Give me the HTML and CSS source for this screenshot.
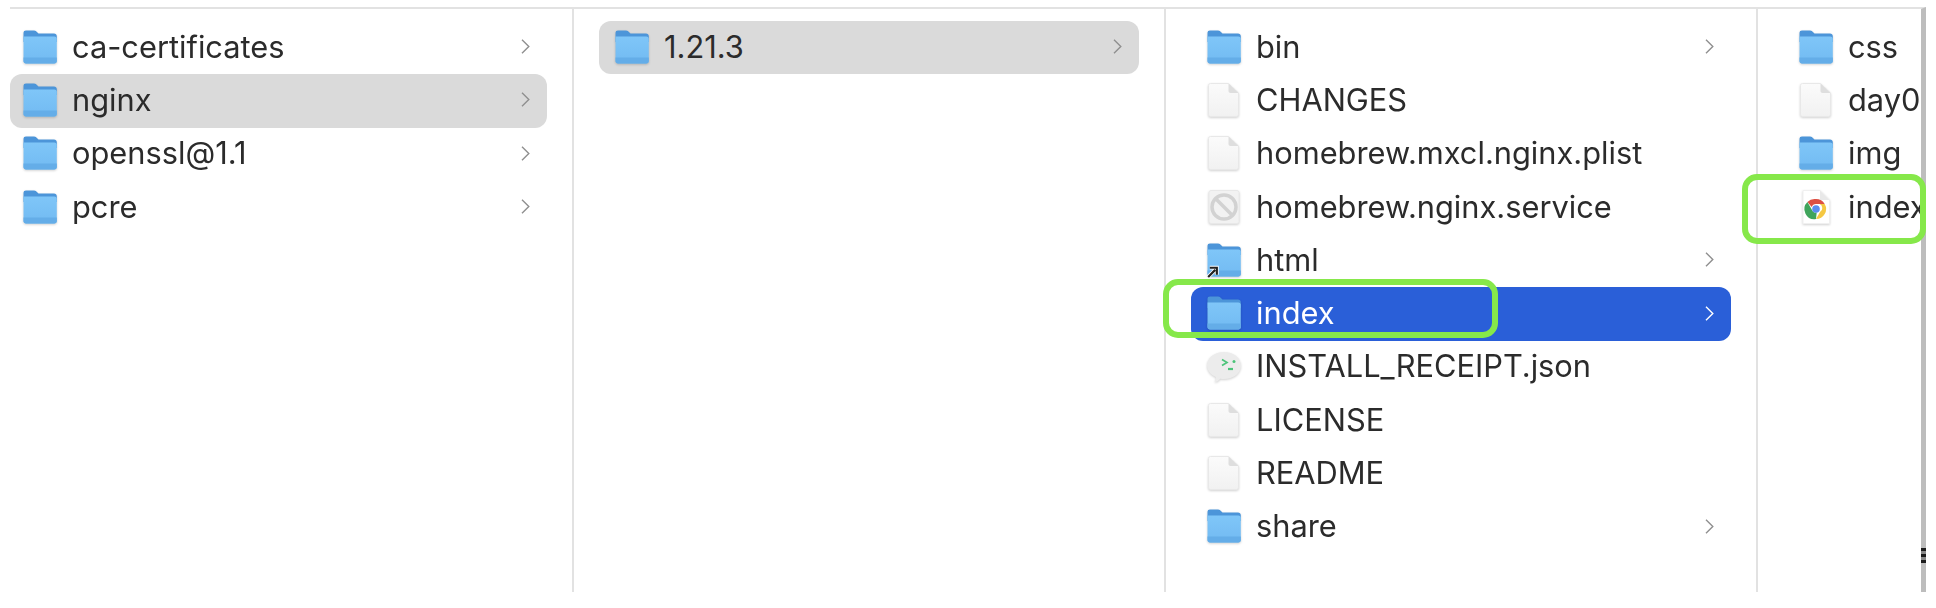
FILE: index.html
```html
<!DOCTYPE html>
<html lang="en">
<head>
  <meta charset="UTF-8" />
  <title>nginx</title>
  <link rel="stylesheet" href="styles.css">
</head>
<body>
  <svg class="defs" width="0" height="0">
    <defs>
      <linearGradient id="docFill" x1="0" y1="0" x2="0" y2="1">
        <stop offset="0" stop-color="#fbfbfb" />
        <stop offset="1" stop-color="#f1f1f1" />
      </linearGradient>
      <linearGradient id="folderFill" x1="0" y1="0" x2="0" y2="1">
        <stop offset="0" stop-color="#7fc6f8" />
        <stop offset="1" stop-color="#72baf2" />
      </linearGradient>
      <symbol id="folder" viewBox="0 0 34 34">
        <path d="M.5 3C.5 1.300 1.500.5 3 .5h8c1 0 1.700.4 2.400 1.100L15.500 3.500H31c1.600 0 2.800 1.100 2.800 2.700V12H.5z" fill="#4c95d9" />
        <path d="M.5 6.500h30.800c1.600 0 2.500 1 2.500 2.500v22c0 1.500-1 2.500-2.500 2.500H3C1.500 33.500.5 32.500.5 31z" fill="url(#folderFill)" />
        <path d="M.5 27.500h33.300V31c0 1.500-1 2.500-2.500 2.500H3C1.500 33.500.5 32.500.5 31z" fill="#64ade8" />
      </symbol>
      <symbol id="doc" viewBox="0 0 34 34">
        <path d="M3.500.5h18l10 9.500v21.500c0 1.300-.8 2-2 2h-26c-1.200 0-2-.7-2-2v-29c0-1.300.8-2 2-2z" fill="url(#docFill)" stroke="#e8e8e8" />
        <path d="M21.500.5v7.500c0 1.200.8 2 2 2h8z" fill="#dedede" />
      </symbol>
      <symbol id="blocked" viewBox="0 0 34 34">
        <rect x="2" y="0.500" width="30" height="33" rx="2" fill="#f2f2f2" stroke="#e8e8e8" />
        <circle cx="17" cy="17" r="12" fill="none" stroke="#d2d2d2" stroke-width="3.500" />
        <path d="M9 9l16 16" stroke="#d2d2d2" stroke-width="3.500" />
      </symbol>
      <symbol id="bubble" viewBox="0 0 34 34">
        <path d="M17 3c9.400 0 17 5.800 17 13.500S26.400 30 17 30c-1.300 0-2.600-.1-3.800-.3C11.500 31.800 9.500 33 7.500 33c1-1.300 1.400-3 1.300-5C3.600 25.700 0 21.500 0 16.500 0 8.800 7.600 3 17 3z" fill="#ececec" />
        <path d="M15 10.500l5 3-5 3" fill="none" stroke="#4cc47a" stroke-width="1.700" />
        <path d="M21 20h5" stroke="#4cc47a" stroke-width="2.200" />
        <circle cx="27" cy="12.500" r="1.500" fill="#4cc47a" />
      </symbol>
      <symbol id="chrome" viewBox="0 0 34 34">
        <path d="M4 .5h17l9.500 9.500v23.500H4z" fill="#fff" stroke="#f0f0f0" />
        <path d="M21 .5V10h9.500z" fill="#e8e8e8" />
        <path d="M17 9a10 10 0 0 1 8.700 5H17a4.500 4.500 0 0 0-4.300 3l-4.300-5A10 10 0 0 1 17 9z" fill="#dd5044" />
        <path d="M25.700 14A10 10 0 0 1 17 29l4-7a4.500 4.500 0 0 0-.3-8z" fill="#f5c842" />
        <path d="M17 29A10 10 0 0 1 8.400 12l4.300 7.500a4.500 4.500 0 0 0 5 3z" fill="#3fa45b" />
        <circle cx="17" cy="19" r="3.800" fill="#5a8df0" />
      </symbol>
      <symbol id="chevron" viewBox="0 0 9 15">
        <path d="M1 .8L7.800 7.500 1 14.200" fill="none" stroke="currentColor" stroke-width="1.400" />
      </symbol>
    </defs>
  </svg>

  <div class="browser">
    <div class="col col-first">
      <div class="row"><svg class="ico"><use href="#folder" /></svg><span class="name">ca-certificates</span><svg class="chev"><use href="#chevron" /></svg></div>
      <div class="row active"><svg class="ico"><use href="#folder" /></svg><span class="name">nginx</span><svg class="chev"><use href="#chevron" /></svg></div>
      <div class="row"><svg class="ico"><use href="#folder" /></svg><span class="name">openssl@1.1</span><svg class="chev"><use href="#chevron" /></svg></div>
      <div class="row"><svg class="ico"><use href="#folder" /></svg><span class="name">pcre</span><svg class="chev"><use href="#chevron" /></svg></div>
    </div>

    <div class="col">
      <div class="row active"><svg class="ico"><use href="#folder" /></svg><span class="name">1.21.3</span><svg class="chev"><use href="#chevron" /></svg></div>
    </div>

    <div class="col">
      <div class="row"><svg class="ico"><use href="#folder" /></svg><span class="name">bin</span><svg class="chev"><use href="#chevron" /></svg></div>
      <div class="row"><svg class="ico"><use href="#doc" /></svg><span class="name">CHANGES</span></div>
      <div class="row"><svg class="ico"><use href="#doc" /></svg><span class="name">homebrew.mxcl.nginx.plist</span></div>
      <div class="row"><svg class="ico"><use href="#blocked" /></svg><span class="name">homebrew.nginx.service</span></div>
      <div class="row">
        <span class="alias-wrap">
          <svg class="ico"><use href="#folder" /></svg>
          <svg class="alias" viewBox="0 0 12 12"><path d="M2 11l6.500-6.500M3.500 2.500h6.500v6.500" fill="none" stroke="#fff" stroke-width="3.500" /><path d="M2 11l6.500-6.500M3.500 2.500h6.500v6.500" fill="none" stroke="#222" stroke-width="2" /></svg>
        </span>
        <span class="name">html</span><svg class="chev"><use href="#chevron" /></svg>
      </div>
      <div class="row selected"><svg class="ico"><use href="#folder" /></svg><span class="name">index</span><svg class="chev"><use href="#chevron" /></svg></div>
      <div class="row"><svg class="ico"><use href="#bubble" /></svg><span class="name">INSTALL_RECEIPT.json</span></div>
      <div class="row"><svg class="ico"><use href="#doc" /></svg><span class="name">LICENSE</span></div>
      <div class="row"><svg class="ico"><use href="#doc" /></svg><span class="name">README</span></div>
      <div class="row"><svg class="ico"><use href="#folder" /></svg><span class="name">share</span><svg class="chev"><use href="#chevron" /></svg></div>
    </div>

    <div class="col col-last">
      <div class="row"><svg class="ico"><use href="#folder" /></svg><span class="name">css</span></div>
      <div class="row"><svg class="ico"><use href="#doc" /></svg><span class="name">day07</span></div>
      <div class="row"><svg class="ico"><use href="#folder" /></svg><span class="name">img</span></div>
      <div class="row"><svg class="ico"><use href="#chrome" /></svg><span class="name">index</span></div>
    </div>
  </div>

  <!-- green annotation boxes drawn on top of the screenshot -->
  <div class="mark mark-index"></div>
  <div class="mark mark-file"></div>
  <!-- sliver of a dark letter sitting on the right edge -->
  <div class="edge-sliver"></div>
</body>
</html>
```

FILE: styles.css
```css
html, body {
  margin: 0;
  height: 608px;
  background: #fff;
  overflow: hidden;
}
body {
  position: relative;
  font-family: Inter, "Liberation Sans", Arial, sans-serif;
  color: #2b2b2b;
}
.defs {
  position: absolute;
}
.browser {
  display: flex;
  box-sizing: border-box;
  width: 1916px;
  height: 585px;
  margin: 7px 0 0 10px;
  border-top: 2px solid #e2e2e2;
  border-right: 5px solid #bdbdbd;
  overflow: hidden;
  filter: blur(0.5px);
}
.col {
  flex: none;
  box-sizing: border-box;
  width: 592px;
  padding: 12px 25px 0 24.5px;
  border-right: 2px solid #e2e2e2;
}
.col-first {
  width: 564px;
  padding-left: 0;
}
.col-last {
  flex: 1;
  padding-right: 0;
  border-right: none;
}
.row {
  display: flex;
  align-items: center;
  height: 53.3px;
  padding: 0 17px 0 13px;
  border-radius: 12px;
  font-size: 30.8px;
  white-space: nowrap;
}
.col:not(.col-first) .row {
  padding-left: 16.5px;
}
.active {
  background: #dadada;
}
.selected {
  background: #2a5fd8;
  color: #fff;
}
.ico {
  flex: none;
  width: 34px;
  height: 34px;
  margin-bottom: 2px;
  filter: drop-shadow(0 1px 1px rgba(0, 0, 0, 0.18));
}
.name {
  margin-left: 15px;
  padding-bottom: 3px;
  flex: 1;
}
.chev {
  flex: none;
  width: 9px;
  height: 15px;
  margin-bottom: 2px;
  color: #8f8f8f;
}
.selected .chev {
  color: #fff;
}
.alias-wrap {
  position: relative;
  display: flex;
}
.alias {
  position: absolute;
  left: -1px;
  bottom: 1px;
  width: 13px;
  height: 13px;
}
.mark {
  position: absolute;
  box-sizing: border-box;
  border: 6px solid #86e84a;
  border-radius: 15px;
}
.mark-index {
  left: 1163px;
  top: 279px;
  width: 335px;
  height: 59px;
}
.mark-file {
  left: 1742px;
  top: 174px;
  width: 184px;
  height: 70px;
}
.edge-sliver {
  position: absolute;
  left: 1921px;
  top: 548px;
  width: 5px;
  height: 15px;
  background: repeating-linear-gradient(#1c1c1c 0 3px, #8a8a8a 3px 6px);
}
```
